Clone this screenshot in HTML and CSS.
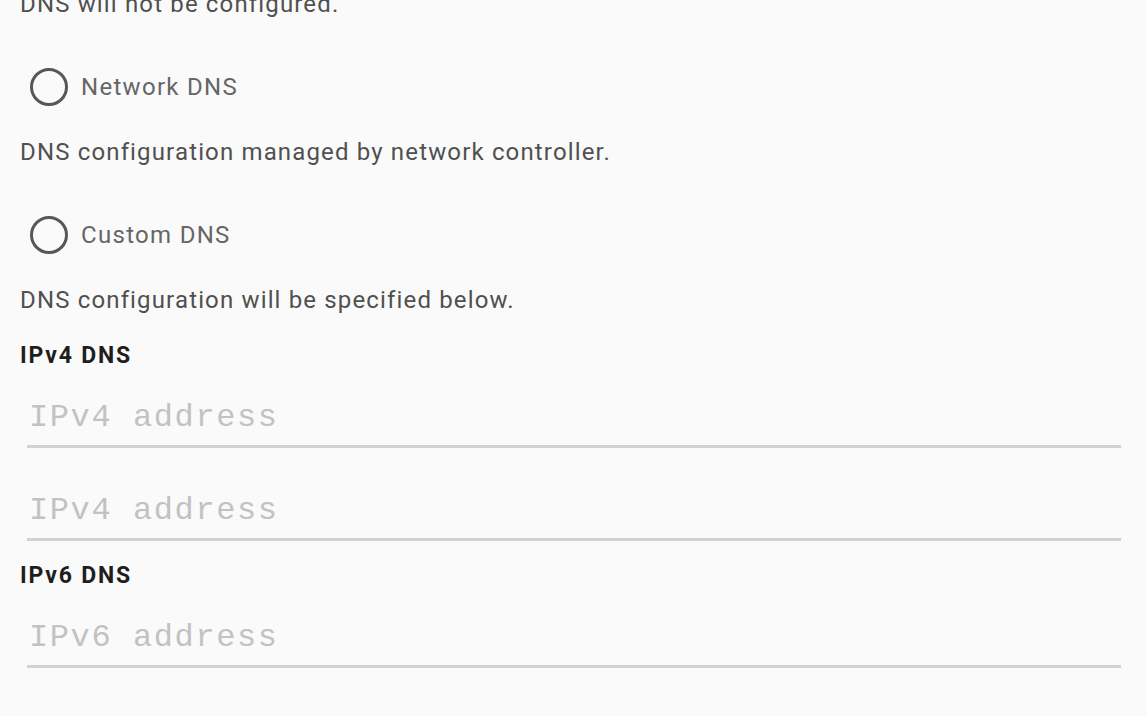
FILE: index.html
```html
<!DOCTYPE html>
<html>
<head>
<meta charset="utf-8">
<link rel="stylesheet" href="styles.css">
</head>
<body>
<div class="page">
  <p class="desc first">DNS will not be configured.</p>
  <label class="radio-row"><span class="radio"></span><span class="radio-label">Network DNS</span></label>
  <p class="desc">DNS configuration managed by network controller.</p>
  <label class="radio-row"><span class="radio"></span><span class="radio-label">Custom DNS</span></label>
  <p class="desc">DNS configuration will be specified below.</p>
  <div class="section-label">IPv4 DNS</div>
  <input class="field" type="text" placeholder="IPv4 address">
  <input class="field next" type="text" placeholder="IPv4 address">
  <div class="section-label">IPv6 DNS</div>
  <input class="field" type="text" placeholder="IPv6 address">
  <input class="field next" type="text" placeholder="IPv6 address">
</div>
</body>
</html>
```
FILE: styles.css
```css
html, body {
  margin: 0;
  padding: 0;
  background: #fafafa;
  overflow: hidden;
}
.page {
  display: flex;
  flex-direction: column;
  padding: 0 27px 0 20px;
  margin-top: -11px;
  font-family: Roboto, "Liberation Sans", sans-serif;
}
.desc {
  margin: 0;
  font-size: 24px;
  line-height: 30px;
  letter-spacing: 1.15px;
  color: #505050;
  white-space: nowrap;
}
.radio-row {
  display: flex;
  align-items: center;
  height: 60px;
  margin: 38px 0 20px;
}
.radio {
  box-sizing: border-box;
  width: 38px;
  height: 38px;
  margin-left: 10px;
  border: 3px solid #575757;
  border-radius: 50%;
  flex: none;
}
.radio-label {
  margin-left: 13px;
  font-size: 24px;
  letter-spacing: 1.3px;
  color: #666;
}
.section-label {
  margin-top: 28px;
  font-size: 23px;
  line-height: 26px;
  letter-spacing: 1.8px;
  font-weight: bold;
  color: #1e1e1e;
}
.field {
  display: block;
  box-sizing: content-box;
  width: calc(100% - 7px);
  height: 56px;
  margin: 20px 0 0 7px;
  padding: 0 0 0 2px;
  border: none;
  border-bottom: 3px solid #d2d2d2;
  background: transparent;
  font-family: "Liberation Mono", "Courier New", monospace;
  font-size: 32px;
  letter-spacing: 1.6px;
  color: #333;
  outline: none;
}
.field.next {
  margin-top: 34px;
}
.field.next + .section-label {
  margin-top: 22px;
}
.field::placeholder {
  color: #c2c2c2;
}
```
